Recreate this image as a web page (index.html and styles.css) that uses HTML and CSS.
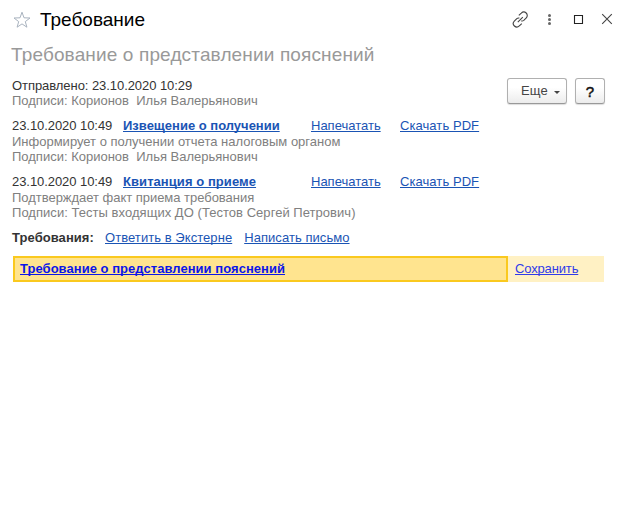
FILE: index.html
```html
<!DOCTYPE html>
<html lang="ru">
<head>
<meta charset="utf-8">
<title>Требование</title>
<link rel="stylesheet" href="styles.css">
</head>
<body>
<header class="titlebar">
  <svg class="star" width="18" height="18" viewBox="0 0 18 18"><path d="M9 1.2 11 6.8 17 7 12.3 10.6 13.9 16.2 9 12.9 4.1 16.2 5.7 10.6 1 7 7 6.8Z"/></svg>
  <h1 class="window-title">Требование</h1>
  <svg class="window-icons" width="104" height="18" viewBox="0 0 104 18">
    <g class="stroke"><path d="M6.8 4.4 9.3 2.1a3.4 3.4 0 0 1 5 4.8L11.8 9.4Q10.6 10.3 9.3 9.9M9.8 12.6 7.3 14.9a3.4 3.4 0 0 1-5-4.8L4.8 7.6Q6 6.7 7.3 7.1M5.8 11.2 10.8 6.2"/></g>
    <g class="dots"><circle cx="37.5" cy="4.5" r="1.5"/><circle cx="37.5" cy="8.5" r="1.5"/><circle cx="37.5" cy="12.5" r="1.5"/></g>
    <path class="square" d="M62.5 4.5h8v8h-8z"/>
    <path class="stroke" d="m90.2 3.2 9.6 9.6m0-9.6-9.6 9.6"/>
  </svg>
</header>
<h2 class="subject">Требование о представлении пояснений</h2>
<main class="content">
  <section class="sent">
    <div class="info">
      <div class="line sent-date">Отправлено: 23.10.2020 10:29</div>
      <div class="note">Подписи: Корионов&nbsp; Илья Валерьянович</div>
    </div>
    <div class="buttons">
      <button class="button more">Еще<span class="caret"></span></button>
      <button class="button help">?</button>
    </div>
  </section>
  <section class="document">
    <div class="document-row"><span class="date">23.10.2020 10:49</span><a class="strong" href="#">Извещение о получении</a><a href="#">Напечатать</a><a class="pdf" href="#">Скачать PDF</a></div>
    <div class="note">Информирует о получении отчета налоговым органом</div>
    <div class="note">Подписи: Корионов&nbsp; Илья Валерьянович</div>
  </section>
  <section class="document">
    <div class="document-row"><span class="date">23.10.2020 10:49</span><a class="strong receipt" href="#">Квитанция о приеме</a><a href="#">Напечатать</a><a class="pdf" href="#">Скачать PDF</a></div>
    <div class="note tight">Подтверждает факт приема требования</div>
    <div class="note wide">Подписи: Тесты входящих ДО (Тестов Сергей Петрович)</div>
  </section>
  <div class="actions"><b>Требования:</b><a href="#">Ответить в Экстерне</a><a href="#">Написать письмо</a></div>
  <div class="attachment">
    <div class="attachment-name"><a href="#">Требование о представлении пояснений</a></div>
    <div class="attachment-save"><a href="#">Сохранить</a></div>
  </div>
</main>
</body>
</html>
```
FILE: styles.css
```css
* { box-sizing: border-box; }
body { margin: 0; background: #fff; color: #333; font: 13px/15px "Liberation Sans", Arial, sans-serif; }
.titlebar { display: flex; align-items: center; height: 40px; padding: 0 11px 0 13px; }
.star { fill: none; stroke: #a9b3bf; stroke-width: 1; margin-top: -1px; }
.window-title { margin: 0 auto 0 9px; color: #000; font-size: 19px; line-height: 24px; font-weight: 400; }
.window-icons { fill: none; }
.stroke { stroke: #444; stroke-width: 1.1; }
.dots { fill: #666; }
.square { stroke: #222; stroke-width: 1.1; }
.subject { margin: 3px 0 0 11px; color: #999; font-size: 19px; line-height: 24px; font-weight: 400; letter-spacing: .14px; }
.content { padding: 11px 22px 0 12px; }
a { color: #1a54b4; text-decoration: underline; text-underline-offset: 1px; text-decoration-thickness: 1px; text-decoration-skip-ink: none; white-space: nowrap; }
.sent { display: flex; justify-content: space-between; height: 40px; }
.sent-date, .date { letter-spacing: -.06px; }
.note { color: #808080; }
.tight { letter-spacing: -.03px; }
.wide { letter-spacing: .04px; }
.pdf, .receipt { letter-spacing: .07px; }
.buttons { display: flex; gap: 8px; }
.button { height: 26px; padding: 0; border: 1px solid #b0b0b0; border-bottom-color: #999; border-radius: 3px; background: linear-gradient(#fff 35%, #ececec); box-shadow: 0 1px 1px #ddd; color: #444; font: inherit; }
.more { display: flex; align-items: center; width: 60px; padding: 0 0 1px 13px; letter-spacing: .2px; }
.caret { margin: 4px 0 0 6px; border: 3px solid transparent; border-top-color: #444; border-bottom: 0; }
.help { width: 30px; color: #111; font-size: 15px; -webkit-text-stroke: .5px #111; }
.document { height: 56px; }
.document-row { display: grid; grid-template-columns: 111px 188px 89px auto; height: 16px; }
.strong { font-weight: 700; }
.actions { display: flex; height: 26px; letter-spacing: .06px; }
.actions b { width: 93px; }
.actions a { margin-right: 12px; }
.attachment { display: flex; width: 591px; height: 26px; margin-left: 1px; background: #fff1c4; line-height: 21px; }
.attachment-name { width: 495px; padding-left: 5px; border: 2px solid #fac91f; background: #ffe48f; font-weight: 700; letter-spacing: .04px; }
.attachment-name a { color: #0b16e8; }
.attachment-save { padding: 2px 0 0 7px; letter-spacing: -.15px; }
.attachment-save a { color: #303bea; }
```
